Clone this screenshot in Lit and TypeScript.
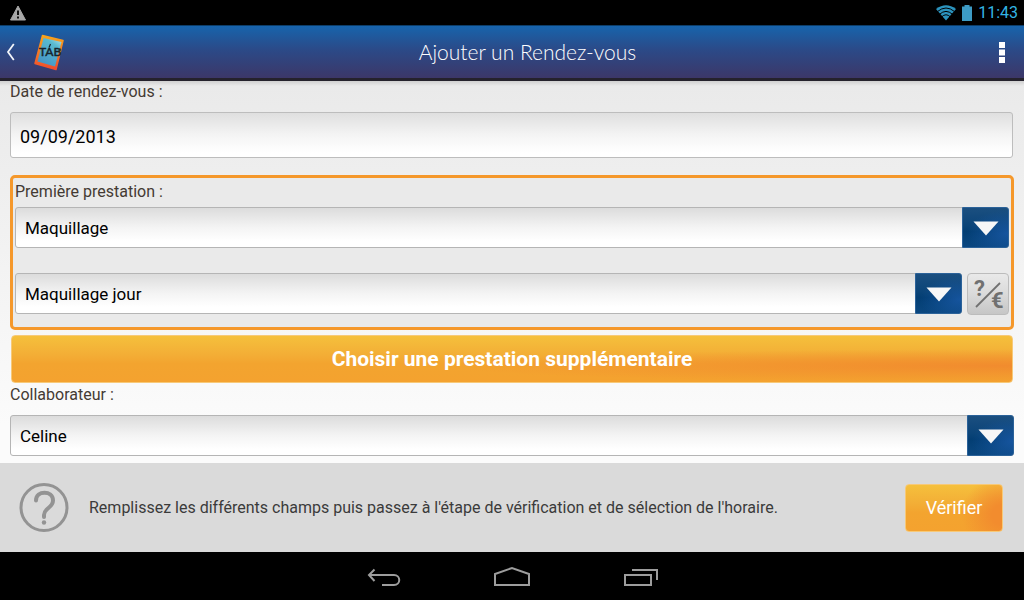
import { LitElement, html, css, nothing } from "lit";
import { customElement, property } from "lit/decorators.js";

@customElement("choice-field")
class ChoiceField extends LitElement {
  @property() label = "";
  @property({ type: Boolean }) unlabelled = false;
  @property({ attribute: false }) options: string[] = [];

  static styles = css`
    :host { display: block; min-width: 0; }
    .label { display: block; font-size: 16px; line-height: 20px; color: #443a33; margin-bottom: var(--label-gap, 5px); }
    .box { display: grid; grid-template-columns: minmax(0, 1fr) 47px; }
    .select {
      grid-area: 1 / 1 / 2 / 3;
      appearance: none;
      box-sizing: border-box;
      width: 100%;
      height: 41px;
      margin: 0;
      padding: 0 56px 0 9px;
      border: 1px solid #b5b5b5;
      border-radius: 3px;
      background: linear-gradient(#dcdcdc, #f4f4f4 50%, #ffffff 85%);
      color: #000;
      font: 17px/24px Roboto, sans-serif;
    }
    .arrow {
      grid-area: 1 / 2 / 2 / 3;
      box-sizing: border-box;
      display: flex;
      align-items: center;
      justify-content: center;
      padding-top: 2px;
      border: 1px solid #2b6299;
      border-radius: 0 3px 3px 0;
      background:
        radial-gradient(ellipse at 100% 65%, rgba(28, 92, 172, 0.75), rgba(28, 92, 172, 0) 65%),
        linear-gradient(#1b4f80, #0b4478 45%, #033e73 60%, #0b4780);
      pointer-events: none;
    }
  `;

  render() {
    return html`
      ${this.unlabelled ? nothing : html`<label for="choice" class="label">${this.label}</label>`}
      <div class="box">
        <select id="choice" class="select" aria-label=${this.unlabelled ? this.label : nothing}>
          ${this.options.map((o) => html`<option>${o}</option>`)}
        </select>
        <span class="arrow">
          <svg width="26" height="15" viewBox="0 0 26 15" aria-hidden="true"><path d="M0.5 0.5h25L13 14.5z" fill="#f7f7f7" /></svg>
        </span>
      </div>
    `;
  }
}

@customElement("app-root")
class AppRoot extends LitElement {
  static styles = css`
    :host {
      display: flex;
      flex-direction: column;
      height: 100vh;
      overflow: hidden;
      background: #000;
      font-family: Roboto, sans-serif;
    }
    button { margin: 0; padding: 0; font-family: inherit; cursor: pointer; }
    svg { display: block; }

    .status {
      flex: none;
      display: flex;
      align-items: center;
      gap: 6px;
      height: 25px;
      padding: 0 6px 0 9px;
      color: #33b5e5;
      font-size: 16px;
      line-height: 24px;
    }
    .warn { margin-right: auto; }

    .bar {
      flex: none;
      box-sizing: border-box;
      display: grid;
      grid-template-columns: auto 1fr auto;
      align-items: center;
      height: 56px;
      padding: 0 11px 0 5px;
      border-top: 1px solid #0d3d68;
      border-bottom: 3px solid #25222c;
      background: linear-gradient(#1764ac, #2b4a88 45%, #3c3768);
    }
    .up, .more, .key { border: 0; background: none; }
    .up { display: flex; align-items: center; gap: 18px; }
    .more { padding: 8px; }
    .title {
      margin: 0;
      color: #fff;
      text-align: center;
      font: 300 21px/28px Lato, sans-serif;
    }
    .logo-text { font: 500 12px Lato, sans-serif; }

    .form {
      flex: 1;
      min-height: 0;
      overflow: hidden;
      padding: 1px 10px 0;
      background: linear-gradient(#d0d0d0, #eaeaea 5px, #eeeeee 90px, #fbfbfb 90%);
    }
    .label { display: block; font-size: 16px; line-height: 20px; color: #443a33; }
    .text {
      box-sizing: border-box;
      display: block;
      width: calc(100% - 1px);
      height: 46px;
      margin: 10px 0 17px;
      padding: 2px 9px 0;
      border: 1px solid #bdbdbd;
      border-radius: 3px;
      background: linear-gradient(#dfdfdf, #f4f4f4 50%, #ffffff 90%);
      color: #000;
      font: 18px/24px Roboto, sans-serif;
    }
    .service {
      display: flex;
      flex-direction: column;
      gap: 25px;
      padding: 4px 2px 12px;
      border: 3px solid #f5982b;
      border-radius: 5px;
      background: #eaeaea;
    }
    .row { display: flex; gap: 5px; }
    .grow { flex: 1; }
    .price {
      box-sizing: border-box;
      display: grid;
      place-items: center;
      width: 42px;
      height: 42px;
      border: 1px solid #bcbcbc;
      border-radius: 4px;
      background: linear-gradient(#e9e9e9, #dadada 50%, #c6c6c6);
      color: #707070;
    }
    .glyph { font: 700 22px Roboto, sans-serif; }
    .orange {
      border: 1px solid #f7c978;
      border-radius: 4px;
      color: #fff;
    }
    .add {
      display: block;
      width: calc(100% - 2px);
      height: 48px;
      margin: 5px 1px 2px;
      background:
        radial-gradient(ellipse at 100% 65%, rgba(241, 138, 46, 0.95), rgba(241, 138, 46, 0) 40%),
        linear-gradient(#f5c03c, #f3ae36 40%, #f3a42f 60%, #f4a22f);
      font-size: 21px;
      line-height: 24px;
      font-weight: 700;
    }
    .staff { --label-gap: 10px; }

    .help {
      flex: none;
      display: flex;
      align-items: center;
      gap: 20px;
      height: 89px;
      padding: 0 21px 0 19px;
      background: #dadada;
      color: #3b3b3b;
    }
    .hint { flex: 1; margin: 0; font-size: 16px; line-height: 20px; }
    .check {
      width: 98px;
      height: 48px;
      background:
        radial-gradient(circle at 100% 65%, #f28c2e 10px, rgba(241, 138, 46, 0) 40px),
        linear-gradient(#f5c03c, #f3ae36 40%, #f3a42f 60%, #f4a22f);
      font-size: 18px;
      line-height: 24px;
    }

    .nav {
      flex: none;
      box-sizing: border-box;
      display: flex;
      align-items: center;
      justify-content: center;
      gap: 88px;
      height: 48px;
      padding-top: 5px;
    }
    .key { width: 40px; height: 40px; }
  `;

  render() {
    return html`
      <div class="status">
        <svg class="warn" width="18" height="16" viewBox="0 0 18 16" aria-hidden="true">
          <path d="M9 1 16.500 15H1.500z" fill="#a8a8a8" stroke="#a8a8a8" stroke-linejoin="round" />
          <path d="M8 5.500h2v4.500H8zM8 11.500h2v2H8z" fill="#111" />
        </svg>
        <svg width="20" height="16" viewBox="0 0 20 16" aria-hidden="true">
          <path d="M0 4Q10-3.500 20 4L10 15.500z" fill="#2b93bd" />
          <g fill="none" stroke="#000" stroke-width="1">
            <path d="M1.500 6.500Q10 -0.500 18.500 6.500" />
            <path d="M3.500 9.300Q10 3.500 16.500 9.300" />
            <path d="M5.500 12Q10 7.500 14.500 12" />
          </g>
        </svg>
        <svg width="10" height="16" viewBox="0 0 10 16" aria-hidden="true"><path d="M0 1.500h2.500V0h5v1.500H10V16H0z" fill="#3d9bc4" /></svg>
        <span>11:43</span>
      </div>

      <header class="bar">
        <button class="up" aria-label="Retour">
          <svg width="10" height="18" viewBox="0 0 10 18" aria-hidden="true"><path d="M8.800 1 3 9l5.800 8" fill="none" stroke="#f2f5fa" stroke-width="1.800" /></svg>
          <svg width="31" height="38" viewBox="0 0 31 38" aria-hidden="true">
            <defs>
              <linearGradient id="edge" x1="0" y1="0" x2="0" y2="1"><stop offset="0" stop-color="#f9a51a" /><stop offset="1" stop-color="#f04b2d" /></linearGradient>
              <linearGradient id="glass" x1="1" y1="0" x2="0.400" y2="1"><stop offset="0" stop-color="#b5e4ec" /><stop offset="0.300" stop-color="#59bad0" /><stop offset="1" stop-color="#4596c6" /></linearGradient>
            </defs>
            <path d="M9.500 2.500 30 7.500 23 36.500 2 30.500z" fill="url(#edge)" stroke="url(#edge)" stroke-width="1.500" stroke-linejoin="round" />
            <path d="M10.500 5 28.500 9 22 33.500 4.500 28.500z" fill="url(#glass)" />
            <text class="logo-text" x="6" y="23" fill="#17242c" stroke="#17242c" stroke-width="0.400">TAB</text>
            <path d="M16 14.500 17.500 11" stroke="#17242c" stroke-width="1.200" />
          </svg>
        </button>
        <h1 class="title">Ajouter un Rendez-vous</h1>
        <button class="more" aria-label="Plus d'options">
          <svg width="6" height="21" viewBox="0 0 6 21" aria-hidden="true"><path d="M0 0h6v6H0zM0 7.500h6v6H0zM0 15h6v6H0z" fill="#fff" /></svg>
        </button>
      </header>

      <main class="form">
        <label class="label" for="date">Date de rendez-vous :</label>
        <input class="text" id="date" type="text" value="09/09/2013" />
        <section class="service">
          <choice-field label="Première prestation :" .options=${["Maquillage"]}></choice-field>
          <div class="row">
            <choice-field class="grow" unlabelled label="Type de prestation" .options=${["Maquillage jour"]}></choice-field>
            <button class="price" aria-label="Informations et tarif">
              <svg width="40" height="40" viewBox="0 0 40 40" fill="currentColor" aria-hidden="true">
                <text class="glyph" x="6" y="22">?</text>
                <text class="glyph" x="23" y="34">€</text>
                <path d="M8 33 32 9" stroke="currentColor" stroke-width="1.800" />
              </svg>
            </button>
          </div>
        </section>
        <button class="add orange">Choisir une prestation supplémentaire</button>
        <choice-field class="staff" label="Collaborateur :" .options=${["Celine"]}></choice-field>
      </main>

      <section class="help">
        <svg width="50" height="50" viewBox="0 0 50 50" fill="none" stroke="#939393" aria-hidden="true">
          <circle cx="25" cy="24.500" r="23" stroke-width="3" />
          <path d="M17 17.500C17 7 34 7 34 17.500C34 25 25 25 25 32V34" stroke-width="4" stroke-linecap="round" />
          <circle cx="25" cy="39.500" r="2.200" fill="#939393" stroke="none" />
        </svg>
        <p class="hint">Remplissez les différents champs puis passez à l'étape de vérification et de sélection de l'horaire.</p>
        <button class="check orange">Vérifier</button>
      </section>

      <nav class="nav">
        <button class="key" aria-label="Précédent">
          <svg width="40" height="40" viewBox="0 0 40 40" fill="none" stroke="#9d9d9d" stroke-width="2" aria-hidden="true"><path d="M5 16H30C37 16 37 26 30 26H18M10.500 10.500 5 16l5.500 6" /></svg>
        </button>
        <button class="key" aria-label="Accueil">
          <svg width="40" height="40" viewBox="0 0 40 40" fill="none" stroke="#9d9d9d" stroke-width="2" aria-hidden="true"><path d="M3 26V15L20 9l17 6v11z" /></svg>
        </button>
        <button class="key" aria-label="Applications récentes">
          <svg width="40" height="40" viewBox="0 0 40 40" fill="none" stroke="#9d9d9d" stroke-width="2" aria-hidden="true"><path d="M5 16h26v10H5zM12 11h25v10" /></svg>
        </button>
      </nav>
    `;
  }
}
